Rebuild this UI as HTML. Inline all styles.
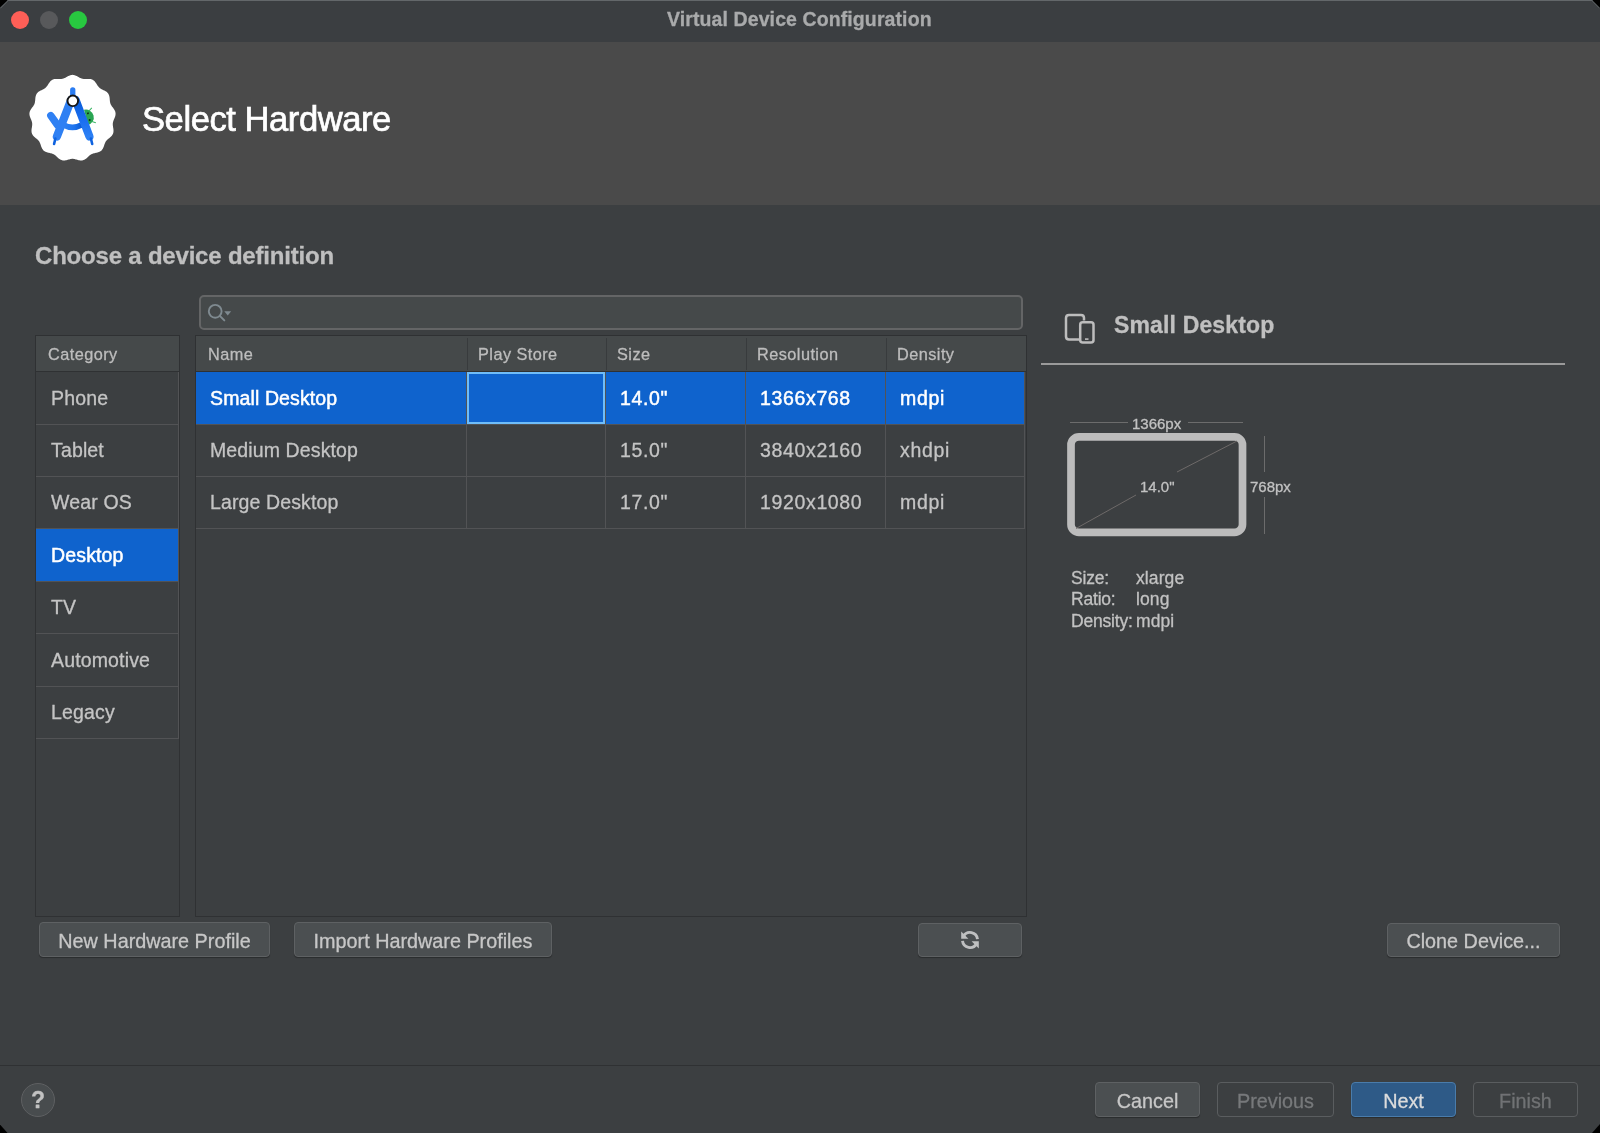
<!DOCTYPE html>
<html><head><meta charset="utf-8">
<style>
*{box-sizing:border-box;margin:0;padding:0}
html,body{width:1600px;height:1133px;overflow:hidden;background:#000}
body{font-family:"Liberation Sans",sans-serif;position:relative}
.win{position:absolute;left:0;top:0;width:1600px;height:1133px;background:#3c3f41;overflow:hidden;clip-path:polygon(8px 0,1592px 0,1600px 8px,1600px 1124px,1592px 1133px,7.5px 1133px,0 1124.5px,0 7.5px)}
.a{position:absolute}
.t{position:absolute;white-space:nowrap;line-height:1;will-change:transform;-webkit-text-stroke:0.3px currentColor}
</style></head><body><div class="win">
<div class="a" style="left:0;top:0;width:1600px;height:42px;background:#3b3e41;border-top:1px solid #63676a"></div>
<svg class="a" style="left:0;top:0" width="1600" height="12" viewBox="0 0 1600 12"><line x1="8.3" y1="0.4" x2="0.4" y2="8.3" stroke="#5f6366" stroke-width="1"/><line x1="1591.7" y1="0.4" x2="1599.6" y2="8.3" stroke="#5f6366" stroke-width="1"/></svg>
<div class="a" style="left:11.3px;top:11.1px;width:18px;height:18px;border-radius:50%;background:#fe5f57"></div>
<div class="a" style="left:40.25px;top:11.1px;width:18px;height:18px;border-radius:50%;background:#58595b"></div>
<div class="a" style="left:69.25px;top:11.1px;width:18px;height:18px;border-radius:50%;background:#28c840"></div>
<div class="t" style="left:666.5px;top:10.19px;font-size:19.5px;color:#a9aaab;font-weight:bold;letter-spacing:0.1px;">Virtual Device Configuration</div>
<div class="a" style="left:0;top:42px;width:1600px;height:163px;background:#4a4a4a"></div>
<div class="t" style="left:141.8px;top:102.41px;font-size:34.6px;color:#ffffff;font-weight:normal;letter-spacing:-0.45px;-webkit-text-stroke:0.7px #ffffff;">Select Hardware</div>
<div class="t" style="left:35.0px;top:244.23px;font-size:24px;color:#bfbfbf;font-weight:bold;letter-spacing:-0.2px;">Choose a device definition</div>
<div class="a" style="left:199px;top:295px;width:824px;height:35px;border:2px solid #646566;border-radius:5px;background:#45494a"></div>
<div class="a" style="left:35px;top:335px;width:145px;height:582px;border:1px solid #2f3133;background:#3c3f41"></div>
<div class="a" style="left:36px;top:336px;width:143px;height:35px;background:#45494a"></div>
<div class="a" style="left:36px;top:371px;width:143px;height:1px;background:#2f3133"></div>
<div class="a" style="left:178px;top:372px;width:1px;height:367px;background:#525355"></div>
<div class="a" style="left:36px;top:424px;width:142px;height:1px;background:#525355"></div>
<div class="a" style="left:36px;top:476px;width:142px;height:1px;background:#525355"></div>
<div class="a" style="left:36px;top:528px;width:142px;height:1px;background:#525355"></div>
<div class="a" style="left:36px;top:581px;width:142px;height:1px;background:#525355"></div>
<div class="a" style="left:36px;top:633px;width:142px;height:1px;background:#525355"></div>
<div class="a" style="left:36px;top:686px;width:142px;height:1px;background:#525355"></div>
<div class="a" style="left:36px;top:738px;width:142px;height:1px;background:#525355"></div>
<div class="a" style="left:36px;top:529px;width:142px;height:52px;background:#0f63cd"></div>
<div class="t" style="left:47.6px;top:346.00px;font-size:16.3px;color:#bdbdbd;font-weight:normal;letter-spacing:0.45px;">Category</div>
<div class="t" style="left:51.0px;top:388.59px;font-size:19.5px;color:#c4c4c4;font-weight:normal;letter-spacing:0.15px;">Phone</div>
<div class="t" style="left:51.0px;top:441.09px;font-size:19.5px;color:#c4c4c4;font-weight:normal;letter-spacing:0.15px;">Tablet</div>
<div class="t" style="left:51.0px;top:493.09px;font-size:19.5px;color:#c4c4c4;font-weight:normal;letter-spacing:0.15px;">Wear OS</div>
<div class="t" style="left:51.0px;top:545.59px;font-size:19.5px;color:#ffffff;font-weight:normal;letter-spacing:0.15px;-webkit-text-stroke:0.5px #fff;">Desktop</div>
<div class="t" style="left:51.0px;top:598.09px;font-size:19.5px;color:#c4c4c4;font-weight:normal;letter-spacing:0.15px;">TV</div>
<div class="t" style="left:51.0px;top:650.59px;font-size:19.5px;color:#c4c4c4;font-weight:normal;letter-spacing:0.15px;">Automotive</div>
<div class="t" style="left:51.0px;top:703.09px;font-size:19.5px;color:#c4c4c4;font-weight:normal;letter-spacing:0.15px;">Legacy</div>
<div class="a" style="left:195px;top:335px;width:832px;height:582px;border:1px solid #2f3133;background:#3c3f41"></div>
<div class="a" style="left:196px;top:336px;width:830px;height:35px;background:#45494a"></div>
<div class="a" style="left:196px;top:371px;width:830px;height:1px;background:#2f3133"></div>
<div class="a" style="left:467px;top:338px;width:1px;height:32px;background:#383b3d"></div>
<div class="a" style="left:606px;top:338px;width:1px;height:32px;background:#383b3d"></div>
<div class="a" style="left:746px;top:338px;width:1px;height:32px;background:#383b3d"></div>
<div class="a" style="left:886px;top:338px;width:1px;height:32px;background:#383b3d"></div>
<div class="a" style="left:196px;top:372px;width:829px;height:52px;background:#0f63cd"></div>
<div class="a" style="left:196px;top:424px;width:829px;height:1px;background:#525355"></div>
<div class="a" style="left:196px;top:476px;width:829px;height:1px;background:#525355"></div>
<div class="a" style="left:196px;top:528px;width:829px;height:1px;background:#525355"></div>
<div class="a" style="left:466px;top:372px;width:1px;height:157px;background:#525355"></div>
<div class="a" style="left:605px;top:372px;width:1px;height:157px;background:#525355"></div>
<div class="a" style="left:745px;top:372px;width:1px;height:157px;background:#525355"></div>
<div class="a" style="left:885px;top:372px;width:1px;height:157px;background:#525355"></div>
<div class="a" style="left:1024px;top:372px;width:1px;height:157px;background:#525355"></div>
<div class="a" style="left:467px;top:372px;width:138px;height:52px;border:2px solid #6fbdf9"></div>
<div class="t" style="left:208px;top:346.00px;font-size:16.3px;color:#bdbdbd;font-weight:normal;letter-spacing:0.45px;">Name</div>
<div class="t" style="left:477.5px;top:346.00px;font-size:16.3px;color:#bdbdbd;font-weight:normal;letter-spacing:0.45px;">Play Store</div>
<div class="t" style="left:616.5px;top:346.00px;font-size:16.3px;color:#bdbdbd;font-weight:normal;letter-spacing:0.45px;">Size</div>
<div class="t" style="left:756.5px;top:346.00px;font-size:16.3px;color:#bdbdbd;font-weight:normal;letter-spacing:0.45px;">Resolution</div>
<div class="t" style="left:896.5px;top:346.00px;font-size:16.3px;color:#bdbdbd;font-weight:normal;letter-spacing:0.45px;">Density</div>
<div class="t" style="left:210.0px;top:388.89px;font-size:19.5px;color:#ffffff;font-weight:normal;letter-spacing:0.12px;-webkit-text-stroke:0.5px #fff;">Small Desktop</div>
<div class="t" style="left:620.0px;top:388.89px;font-size:19.5px;color:#ffffff;font-weight:normal;letter-spacing:0.65px;-webkit-text-stroke:0.5px #fff;">14.0"</div>
<div class="t" style="left:760.0px;top:388.89px;font-size:19.5px;color:#ffffff;font-weight:normal;letter-spacing:0.65px;-webkit-text-stroke:0.5px #fff;">1366x768</div>
<div class="t" style="left:900.0px;top:388.89px;font-size:19.5px;color:#ffffff;font-weight:normal;letter-spacing:0.65px;-webkit-text-stroke:0.5px #fff;">mdpi</div>
<div class="t" style="left:210.0px;top:441.39px;font-size:19.5px;color:#c4c4c4;font-weight:normal;letter-spacing:0.12px;">Medium Desktop</div>
<div class="t" style="left:620.0px;top:441.39px;font-size:19.5px;color:#c4c4c4;font-weight:normal;letter-spacing:0.65px;">15.0"</div>
<div class="t" style="left:760.0px;top:441.39px;font-size:19.5px;color:#c4c4c4;font-weight:normal;letter-spacing:0.65px;">3840x2160</div>
<div class="t" style="left:900.0px;top:441.39px;font-size:19.5px;color:#c4c4c4;font-weight:normal;letter-spacing:0.65px;">xhdpi</div>
<div class="t" style="left:210.0px;top:493.39px;font-size:19.5px;color:#c4c4c4;font-weight:normal;letter-spacing:0.12px;">Large Desktop</div>
<div class="t" style="left:620.0px;top:493.39px;font-size:19.5px;color:#c4c4c4;font-weight:normal;letter-spacing:0.65px;">17.0"</div>
<div class="t" style="left:760.0px;top:493.39px;font-size:19.5px;color:#c4c4c4;font-weight:normal;letter-spacing:0.65px;">1920x1080</div>
<div class="t" style="left:900.0px;top:493.39px;font-size:19.5px;color:#c4c4c4;font-weight:normal;letter-spacing:0.65px;">mdpi</div>
<div class="a" style="left:39px;top:922px;width:231px;height:35px;border:1px solid #5e6163;border-radius:4px;background:#4b4f51;box-shadow:0 1px 1px rgba(0,0,0,0.3);"></div>
<div class="t" style="left:39px;width:231px;text-align:center;top:931.64px;font-size:19.8px;color:#c7c7c7">New Hardware Profile</div>
<div class="a" style="left:294px;top:922px;width:258px;height:35px;border:1px solid #5e6163;border-radius:4px;background:#4b4f51;box-shadow:0 1px 1px rgba(0,0,0,0.3);"></div>
<div class="t" style="left:294px;width:258px;text-align:center;top:931.64px;font-size:19.8px;color:#c7c7c7">Import Hardware Profiles</div>
<div class="a" style="left:918px;top:923px;width:104px;height:34px;border:1px solid #5e6163;border-radius:4px;background:#4b4f51;box-shadow:0 1px 1px rgba(0,0,0,0.3);"></div>
<div class="a" style="left:1387px;top:923px;width:173px;height:34px;border:1px solid #5e6163;border-radius:4px;background:#4b4f51;box-shadow:0 1px 1px rgba(0,0,0,0.3);"></div>
<div class="t" style="left:1387px;width:173px;text-align:center;top:932.14px;font-size:19.8px;color:#c7c7c7">Clone Device...</div>
<div class="a" style="left:0;top:1065px;width:1600px;height:1px;background:#2f3133"></div>
<div class="a" style="left:21px;top:1083px;width:34px;height:34px;border-radius:50%;border:1px solid #5e6062;background:#484c4e"></div>
<div class="t" style="left:21px;width:34px;text-align:center;top:1088px;font-size:23px;line-height:24px;font-weight:bold;color:#c2c2c2">?</div>
<div class="a" style="left:1095px;top:1082px;width:105px;height:35px;border:1px solid #5e6163;border-radius:4px;background:#4b4f51;box-shadow:0 1px 1px rgba(0,0,0,0.3);"></div>
<div class="t" style="left:1095px;width:105px;text-align:center;top:1091.64px;font-size:19.8px;color:#c7c7c7">Cancel</div>
<div class="a" style="left:1217px;top:1082px;width:117px;height:35px;border:1px solid #5a5d5f;border-radius:4px;background:transparent;"></div>
<div class="t" style="left:1217px;width:117px;text-align:center;top:1091.64px;font-size:19.8px;color:#77797b">Previous</div>
<div class="a" style="left:1351px;top:1082px;width:105px;height:35px;border:1px solid #4a7cab;border-radius:4px;background:#2e5a87;box-shadow:0 1px 1px rgba(0,0,0,0.3);"></div>
<div class="t" style="left:1351px;width:105px;text-align:center;top:1091.64px;font-size:19.8px;color:#dcdcdc">Next</div>
<div class="a" style="left:1473px;top:1082px;width:105px;height:35px;border:1px solid #5a5d5f;border-radius:4px;background:transparent;"></div>
<div class="t" style="left:1473px;width:105px;text-align:center;top:1091.64px;font-size:19.8px;color:#707274">Finish</div>
<div class="t" style="left:1114px;top:313.93px;font-size:23px;color:#c0c0c0;font-weight:bold;letter-spacing:0.15px;">Small Desktop</div>
<div class="a" style="left:1041px;top:363px;width:524px;height:2px;background:#9a9a9a"></div>
<svg class="a" style="left:1060px;top:308px" width="40" height="40" viewBox="1060 308 40 40">
<path d="M1080.5 339.5 H1069 Q1066 339.5 1066 336.5 V318 Q1066 315 1069 315 H1081 Q1084 315 1084 318 V320.5" fill="none" stroke="#bdbdbd" stroke-width="2.5"/>
<rect x="1080.2" y="322.2" width="13.3" height="20.3" rx="2.5" fill="none" stroke="#bdbdbd" stroke-width="2.5"/>
<rect x="1085" y="338.3" width="3.5" height="1.6" fill="#bdbdbd"/>
</svg>
<svg class="a" style="left:1060px;top:405px" width="250" height="140" viewBox="1060 405 250 140">
<line x1="1070" y1="422.5" x2="1128" y2="422.5" stroke="#6c6c6c" stroke-width="1"/>
<line x1="1188" y1="422.5" x2="1243" y2="422.5" stroke="#6c6c6c" stroke-width="1"/>
<line x1="1264.5" y1="436" x2="1264.5" y2="472" stroke="#6c6c6c" stroke-width="1"/>
<line x1="1264.5" y1="497" x2="1264.5" y2="534" stroke="#6c6c6c" stroke-width="1"/>
<rect x="1071" y="436.8" width="171.5" height="95.6" rx="8" fill="none" stroke="#bcbcbc" stroke-width="7.7"/>
<line x1="1076" y1="528.5" x2="1136" y2="495" stroke="#6e6a69" stroke-width="1"/>
<line x1="1177" y1="472" x2="1237" y2="441" stroke="#6e6a69" stroke-width="1"/>
</svg>
<div class="t" style="left:1132px;top:416.30px;font-size:15px;color:#c2c2c2;font-weight:normal;letter-spacing:0px;">1366px</div>
<div class="t" style="left:1139.5px;top:478.60px;font-size:15px;color:#c2c2c2;font-weight:normal;letter-spacing:0px;">14.0"</div>
<div class="t" style="left:1249.5px;top:478.90px;font-size:15px;color:#c2c2c2;font-weight:normal;letter-spacing:0px;">768px</div>
<div class="t" style="left:1071px;top:569.59px;font-size:17.5px;color:#c2c2c2;font-weight:normal;letter-spacing:-0.2px;">Size:</div>
<div class="t" style="left:1136px;top:569.59px;font-size:17.5px;color:#c2c2c2;font-weight:normal;letter-spacing:0.1px;">xlarge</div>
<div class="t" style="left:1071px;top:591.29px;font-size:17.5px;color:#c2c2c2;font-weight:normal;letter-spacing:-0.2px;">Ratio:</div>
<div class="t" style="left:1136px;top:591.29px;font-size:17.5px;color:#c2c2c2;font-weight:normal;letter-spacing:0.1px;">long</div>
<div class="t" style="left:1071px;top:612.99px;font-size:17.5px;color:#c2c2c2;font-weight:normal;letter-spacing:-0.2px;">Density:</div>
<div class="t" style="left:1136px;top:612.99px;font-size:17.5px;color:#c2c2c2;font-weight:normal;letter-spacing:0.1px;">mdpi</div>
<svg class="a" style="left:200px;top:298px" width="40" height="30" viewBox="200 298 40 30">
<circle cx="215.2" cy="311.3" r="6.4" fill="none" stroke="#7f8a90" stroke-width="1.9"/>
<line x1="219.8" y1="315.9" x2="224.3" y2="320.4" stroke="#7f8a90" stroke-width="2" stroke-linecap="round"/>
<path d="M224.3 311.2 H231.2 L227.75 315.4 Z" fill="#7f8a90"/>
</svg>
<svg class="a" style="left:955px;top:925px" width="30" height="30" viewBox="955 925 30 30">
<g fill="none" stroke="#bfc0c1" stroke-width="2.9">
<path d="M963.46 936.23 A7.55 7.55 0 0 1 977.49 939.08"/>
<path d="M976.54 943.77 A7.55 7.55 0 0 1 962.51 940.92"/>
</g>
<path d="M961.2 931.6 L961.2 938.8 L968.4 938.8 Z" fill="#bfc0c1"/>
<path d="M978.8 948.4 L978.8 941.2 L971.6 941.2 Z" fill="#bfc0c1"/>
</svg>
<svg class="a" style="left:25px;top:70px" width="95" height="95" viewBox="25 70 95 95">
<path id="badge" d="M72.50 74.85 L73.20 74.89 L73.89 74.99 L74.58 75.16 L75.26 75.39 L75.93 75.66 L76.59 75.98 L77.24 76.33 L77.88 76.69 L78.51 77.05 L79.13 77.41 L79.75 77.75 L80.36 78.05 L80.98 78.32 L81.60 78.55 L82.23 78.73 L82.87 78.86 L83.53 78.95 L84.20 79.00 L84.88 79.01 L85.59 79.00 L86.30 78.97 L87.03 78.94 L87.76 78.92 L88.50 78.91 L89.23 78.94 L89.95 79.01 L90.66 79.12 L91.35 79.29 L92.01 79.52 L92.65 79.82 L93.25 80.17 L93.81 80.59 L94.35 81.06 L94.84 81.57 L95.31 82.13 L95.75 82.72 L96.16 83.33 L96.56 83.94 L96.94 84.56 L97.33 85.16 L97.71 85.75 L98.12 86.31 L98.54 86.83 L98.98 87.32 L99.46 87.77 L99.96 88.19 L100.50 88.57 L101.07 88.93 L101.68 89.26 L102.30 89.57 L102.95 89.88 L103.61 90.19 L104.27 90.51 L104.92 90.85 L105.56 91.21 L106.17 91.60 L106.74 92.04 L107.27 92.51 L107.75 93.02 L108.18 93.57 L108.54 94.17 L108.85 94.80 L109.11 95.46 L109.30 96.15 L109.46 96.86 L109.57 97.59 L109.66 98.32 L109.72 99.05 L109.78 99.77 L109.84 100.48 L109.91 101.18 L110.00 101.86 L110.13 102.52 L110.30 103.16 L110.51 103.79 L110.76 104.39 L111.06 104.98 L111.41 105.56 L111.78 106.13 L112.19 106.70 L112.62 107.28 L113.06 107.86 L113.50 108.44 L113.92 109.05 L114.31 109.66 L114.67 110.30 L114.98 110.95 L115.23 111.61 L115.41 112.29 L115.53 112.97 L115.58 113.67 L115.56 114.37 L115.48 115.08 L115.34 115.78 L115.14 116.48 L114.90 117.18 L114.64 117.86 L114.36 118.54 L114.07 119.20 L113.79 119.86 L113.53 120.52 L113.30 121.16 L113.11 121.81 L112.96 122.45 L112.85 123.10 L112.80 123.75 L112.79 124.42 L112.82 125.09 L112.89 125.77 L112.99 126.47 L113.10 127.17 L113.22 127.89 L113.33 128.61 L113.43 129.34 L113.49 130.07 L113.51 130.80 L113.48 131.52 L113.40 132.22 L113.25 132.91 L113.03 133.57 L112.75 134.21 L112.41 134.83 L112.01 135.41 L111.55 135.97 L111.05 136.49 L110.52 137.00 L109.97 137.48 L109.41 137.95 L108.84 138.41 L108.29 138.86 L107.76 139.32 L107.25 139.78 L106.78 140.27 L106.35 140.77 L105.95 141.29 L105.60 141.84 L105.29 142.43 L105.00 143.04 L104.75 143.68 L104.51 144.34 L104.28 145.01 L104.05 145.70 L103.82 146.40 L103.56 147.09 L103.28 147.76 L102.96 148.41 L102.60 149.04 L102.20 149.62 L101.75 150.16 L101.25 150.65 L100.70 151.08 L100.11 151.47 L99.48 151.80 L98.82 152.08 L98.14 152.32 L97.43 152.52 L96.72 152.69 L96.00 152.84 L95.29 152.98 L94.59 153.13 L93.90 153.28 L93.24 153.46 L92.60 153.67 L91.98 153.91 L91.39 154.19 L90.82 154.52 L90.27 154.89 L89.74 155.30 L89.22 155.74 L88.70 156.22 L88.18 156.71 L87.66 157.22 L87.13 157.72 L86.58 158.21 L86.01 158.68 L85.43 159.11 L84.82 159.49 L84.19 159.82 L83.54 160.09 L82.87 160.29 L82.19 160.42 L81.49 160.49 L80.78 160.49 L80.06 160.43 L79.35 160.32 L78.63 160.17 L77.92 159.99 L77.21 159.79 L76.51 159.59 L75.83 159.39 L75.15 159.21 L74.48 159.06 L73.81 158.95 L73.16 158.87 L72.50 158.85 L71.84 158.87 L71.19 158.95 L70.52 159.06 L69.85 159.21 L69.17 159.39 L68.49 159.59 L67.79 159.79 L67.08 159.99 L66.37 160.17 L65.65 160.32 L64.94 160.43 L64.22 160.49 L63.51 160.49 L62.81 160.42 L62.13 160.29 L61.46 160.09 L60.81 159.82 L60.18 159.49 L59.57 159.11 L58.99 158.68 L58.42 158.21 L57.87 157.72 L57.34 157.22 L56.82 156.71 L56.30 156.22 L55.78 155.74 L55.26 155.30 L54.73 154.89 L54.18 154.52 L53.61 154.19 L53.02 153.91 L52.40 153.67 L51.76 153.46 L51.10 153.28 L50.41 153.13 L49.71 152.98 L49.00 152.84 L48.28 152.69 L47.57 152.52 L46.86 152.32 L46.18 152.08 L45.52 151.80 L44.89 151.47 L44.30 151.08 L43.75 150.65 L43.25 150.16 L42.80 149.62 L42.40 149.04 L42.04 148.41 L41.72 147.76 L41.44 147.09 L41.18 146.40 L40.95 145.70 L40.72 145.01 L40.49 144.34 L40.25 143.68 L40.00 143.04 L39.71 142.43 L39.40 141.84 L39.05 141.29 L38.65 140.77 L38.22 140.27 L37.75 139.78 L37.24 139.32 L36.71 138.86 L36.16 138.41 L35.59 137.95 L35.03 137.48 L34.48 137.00 L33.95 136.49 L33.45 135.97 L32.99 135.41 L32.59 134.83 L32.25 134.21 L31.97 133.57 L31.75 132.91 L31.60 132.22 L31.52 131.52 L31.49 130.80 L31.51 130.07 L31.57 129.34 L31.67 128.61 L31.78 127.89 L31.90 127.17 L32.01 126.47 L32.11 125.77 L32.18 125.09 L32.21 124.42 L32.20 123.75 L32.15 123.10 L32.04 122.45 L31.89 121.81 L31.70 121.16 L31.47 120.52 L31.21 119.86 L30.93 119.20 L30.64 118.54 L30.36 117.86 L30.10 117.18 L29.86 116.48 L29.66 115.78 L29.52 115.08 L29.44 114.37 L29.42 113.67 L29.47 112.97 L29.59 112.29 L29.77 111.61 L30.02 110.95 L30.33 110.30 L30.69 109.66 L31.08 109.05 L31.50 108.44 L31.94 107.86 L32.38 107.28 L32.81 106.70 L33.22 106.13 L33.59 105.56 L33.94 104.98 L34.24 104.39 L34.49 103.79 L34.70 103.16 L34.87 102.52 L35.00 101.86 L35.09 101.18 L35.16 100.48 L35.22 99.77 L35.28 99.05 L35.34 98.32 L35.43 97.59 L35.54 96.86 L35.70 96.15 L35.89 95.46 L36.15 94.80 L36.46 94.17 L36.82 93.57 L37.25 93.02 L37.73 92.51 L38.26 92.04 L38.83 91.60 L39.44 91.21 L40.08 90.85 L40.73 90.51 L41.39 90.19 L42.05 89.88 L42.70 89.57 L43.32 89.26 L43.93 88.93 L44.50 88.57 L45.04 88.19 L45.54 87.77 L46.02 87.32 L46.46 86.83 L46.88 86.31 L47.29 85.75 L47.67 85.16 L48.06 84.56 L48.44 83.94 L48.84 83.33 L49.25 82.72 L49.69 82.13 L50.16 81.57 L50.65 81.06 L51.19 80.59 L51.75 80.17 L52.35 79.82 L52.99 79.52 L53.65 79.29 L54.34 79.12 L55.05 79.01 L55.77 78.94 L56.50 78.91 L57.24 78.92 L57.97 78.94 L58.70 78.97 L59.41 79.00 L60.12 79.01 L60.80 79.00 L61.47 78.95 L62.13 78.86 L62.77 78.73 L63.40 78.55 L64.02 78.32 L64.64 78.05 L65.25 77.75 L65.87 77.41 L66.49 77.05 L67.12 76.69 L67.76 76.33 L68.41 75.98 L69.07 75.66 L69.74 75.39 L70.42 75.16 L71.11 74.99 L71.80 74.89 Z" fill="#ffffff"/>
<defs>
<linearGradient id="rl" x1="0" y1="0" x2="0" y2="1"><stop offset="0" stop-color="#0a5cd8"/><stop offset="0.55" stop-color="#1a6ef0"/><stop offset="1" stop-color="#2c80f4"/></linearGradient>
<linearGradient id="cb" x1="0" y1="0" x2="1" y2="0"><stop offset="0" stop-color="#2f82f4"/><stop offset="0.6" stop-color="#1f74ee"/><stop offset="1" stop-color="#0a5ad4"/></linearGradient>
</defs>
<path d="M50.8 115.6 L57.5 125" stroke="#2f80f3" stroke-width="7.4" stroke-linecap="round" fill="none"/>
<path d="M63.5 125 Q72.5 129.8 81.5 125" stroke="url(#cb)" stroke-width="5.6" fill="none"/>
<rect x="70.1" y="87.2" width="5.3" height="12" rx="2.65" fill="#2a7cf2"/>
<g transform="rotate(75 86 117.4)">
<path d="M78.2 117.4 A7.8 7.8 0 0 1 93.8 117.4 Z" fill="#2aa552"/>
<path d="M80.5 112.8 L78.3 109.3 M91.5 112.8 L93.7 109.3" stroke="#3ab564" stroke-width="1" fill="none"/>
<circle cx="82.6" cy="114.5" r="1" fill="#0e2a18"/><circle cx="89.4" cy="114.5" r="1" fill="#0e2a18"/>
</g>
<path d="M71.1 100 L56.9 136.4" stroke="#2f80f3" stroke-width="8.2" stroke-linecap="round"/>
<path d="M75.6 100 L89.4 136.4" stroke="url(#rl)" stroke-width="8.2" stroke-linecap="round"/>
<path d="M55.4 138.5 L54.1 144 M90.9 138.5 L92.2 144" stroke="#0f62df" stroke-width="2.6" stroke-linecap="round"/>
<circle cx="72.8" cy="100.85" r="5.3" fill="#ffffff" stroke="#151515" stroke-width="1.9"/>
</svg>
</div></body></html>
